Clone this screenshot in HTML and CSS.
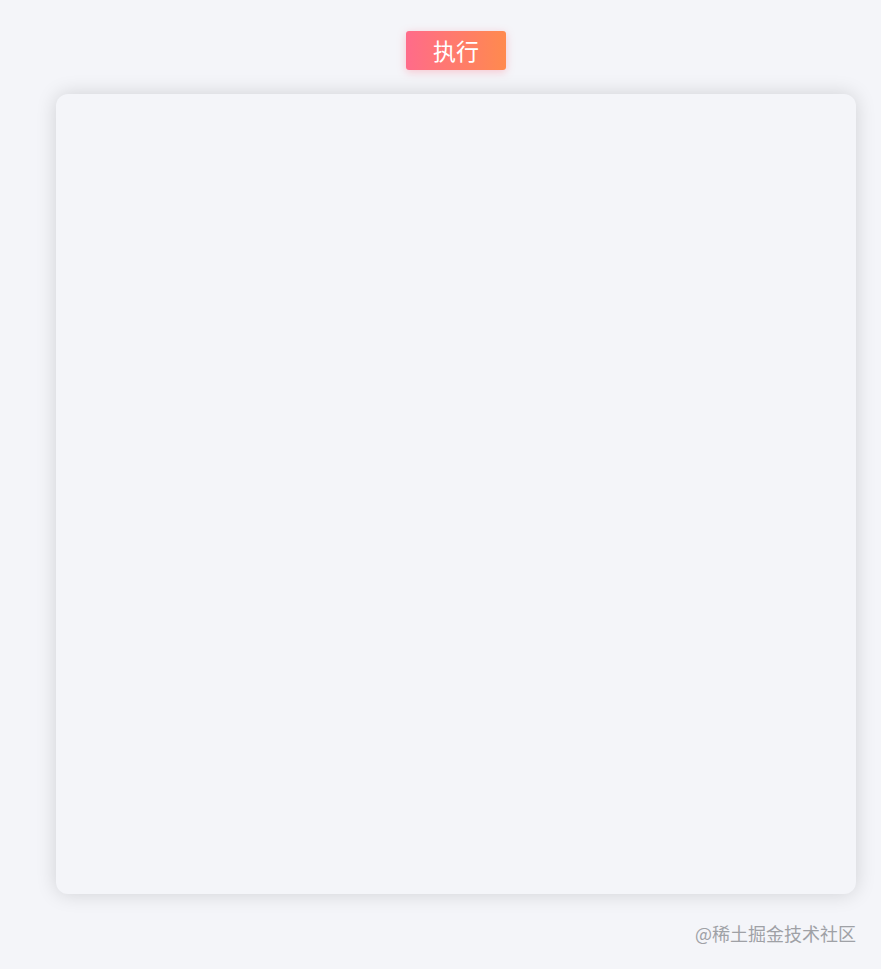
FILE: index.html
```html
<!DOCTYPE html>
<html lang="zh">
<head>
<meta charset="utf-8">
<link rel="stylesheet" href="styles.css">
</head>
<body>
<div class="page">
  <div class="toolbar">
    <button class="run-btn">执行</button>
  </div>
  <div class="stage"></div>
  <div class="footer">
    <span class="watermark">@稀土掘金技术社区</span>
  </div>
</div>
</body>
</html>
```
FILE: styles.css
```css
html, body {
  margin: 0;
  padding: 0;
  background: #f4f5f9;
}
body {
  font-family: "Noto Sans CJK SC", "Noto Sans", sans-serif;
}
.page {
  width: 881px;
  height: 969px;
  display: flex;
  flex-direction: column;
  align-items: center;
}
.toolbar {
  padding-top: 31px;
  height: 39px;
  display: flex;
  justify-content: center;
  width: 100%;
}
.run-btn {
  width: 100px;
  height: 39px;
  margin-left: 31px;
  border: none;
  border-radius: 3px;
  background: linear-gradient(90deg, #ff6b8a 0%, #ff8a4e 100%);
  color: #ffffff;
  font-family: "Noto Sans CJK SC", sans-serif;
  font-size: 23px;
  line-height: 39px;
  padding: 0;
  box-shadow: 0 2px 8px rgba(255, 110, 130, 0.35);
}
.stage {
  margin-top: 24px;
  margin-left: 31px;
  width: 800px;
  height: 800px;
  border-radius: 12px;
  background: #f4f5f9;
  box-shadow: 0 0 20px rgba(0, 0, 0, 0.15);
}
.footer {
  width: 100%;
  display: flex;
  justify-content: flex-end;
  padding-top: 26px;
}
.watermark {
  margin-right: 25px;
  font-size: 18px;
  line-height: 26px;
  color: #9fa1a6;
}
```
